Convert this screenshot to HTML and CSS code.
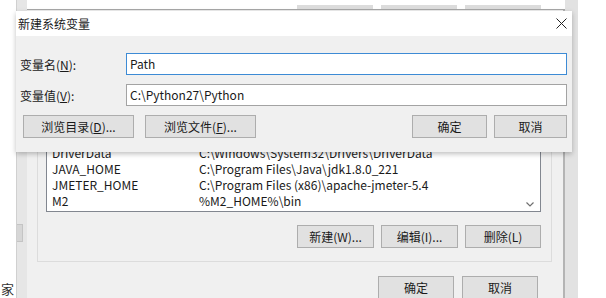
FILE: index.html
```html
<!DOCTYPE html>
<html lang="zh-CN">
<head>
  <meta charset="UTF-8" />
  <title>新建系统变量</title>
  <link rel="stylesheet" href="styles.css">
</head>
<body>
  <div class="desk">

    <div class="win sysprops">
      <div class="sp-btn"></div>
      <span class="sp-glyph">家</span>
    </div>

    <div class="win env">
      <div class="env-top">
        <span class="top-btn"></span>
        <span class="top-btn"></span>
        <span class="top-btn"></span>
      </div>
      <div class="group">
        <div class="list">
          <div class="row"><span class="name">DriverData</span><span>C:\Windows\System32\Drivers\DriverData</span></div>
          <div class="row"><span class="name">JAVA_HOME</span><span>C:\Program Files\Java\jdk1.8.0_221</span></div>
          <div class="row"><span class="name">JMETER_HOME</span><span>C:\Program Files (x86)\apache-jmeter-5.4</span></div>
          <div class="row"><span class="name">M2</span><span>%M2_HOME%\bin</span></div>
          <svg class="chev" width="8" height="5" viewBox="0 0 8 5"><path d="M0.5 0.5 L4 4 L7.5 0.5" fill="none" stroke="#707070" stroke-width="1.2"/></svg>
        </div>
        <div class="btn-row">
          <button class="btn w77">新建(W)...</button>
          <button class="btn w77">编辑(I)...</button>
          <button class="btn w76">删除(L)</button>
        </div>
      </div>
      <div class="btn-row foot">
        <button class="btn w76">确定</button>
        <button class="btn w76">取消</button>
      </div>
    </div>

    <div class="win dialog">
      <div class="titlebar">
        <span>新建系统变量</span>
        <svg class="close" width="11" height="11" viewBox="0 0 11 11"><path d="M0.5 0.5 L10.5 10.5 M10.5 0.5 L0.5 10.5" stroke="#222" stroke-width="1"/></svg>
      </div>
      <div class="dlg-body">
        <div class="field">
          <label>变量名(<u>N</u>):</label>
          <div class="input focus">Path</div>
        </div>
        <div class="field">
          <label>变量值(<u>V</u>):</label>
          <div class="input">C:\Python27\Python</div>
        </div>
        <div class="dlg-buttons">
          <div class="left">
            <button class="btn w111">浏览目录(<u>D</u>)...</button>
            <button class="btn w111">浏览文件(<u>F</u>)...</button>
          </div>
          <div class="right">
            <button class="btn w75">确定</button>
            <button class="btn w73">取消</button>
          </div>
        </div>
      </div>
    </div>

  </div>
</body>
</html>
```

FILE: styles.css
```css
* { box-sizing: border-box; }
body {
  margin: 0;
  background: #fff;
  font-family: "Noto Sans CJK SC", "Noto Sans", sans-serif;
  font-size: 12px;
  color: #1a1a1a;
}
.desk {
  position: relative;
  width: 606px;
  height: 298px;
  overflow: hidden;
}
.win { position: absolute; }

/* window far behind, left edge */
.sysprops {
  left: 16px;
  top: 0;
  width: 12px;
  height: 298px;
  background: #e6e6e6;
  border-left: 1px solid #d0d0d0;
}
.sp-btn {
  margin-top: 224px;
  width: 6px;
  height: 18px;
  background: #d6d6d6;
  border: 1px solid #c4c4c4;
  border-left: none;
}
.sp-glyph {
  position: absolute;
  left: -16px;
  top: 279px;
  font-size: 13px;
  color: #333;
}

/* environment variables window */
.env {
  left: 27px;
  top: 0;
  width: 551px;
  height: 298px;
  background: #f0f0f0;
  border-right: 13px solid #e2e2e2;
  box-shadow: inset -2px 0 0 #b4b4b4;
  display: flex;
  flex-direction: column;
}
.env-top {
  height: 10px;
  border-bottom: 1px solid #a8a8a8;
  display: flex;
  justify-content: flex-end;
  gap: 8px;
  padding-right: 24px;
  background: #fff;
}
.top-btn {
  width: 76px;
  height: 4px;
  margin-top: 5px;
  background: #dcdcdc;
}
.group {
  margin: 4px 13px 0 10px;
  border: 1px solid #dcdcdc;
  padding: 0 10px 13px 8px;
}
.list {
  position: relative;
  height: 197px;
  background: #fff;
  border: 1px solid #828790;
  display: flex;
  flex-direction: column;
  justify-content: flex-end;
  padding: 0 0 2px 5px;
}
.row {
  display: flex;
  height: 16px;
  line-height: 16px;
}
.row .name { width: 147px; }
.chev {
  position: absolute;
  right: 6px;
  bottom: 4px;
}
.btn-row {
  display: flex;
  justify-content: flex-end;
  gap: 7px;
  margin-top: 13px;
}
.foot {
  margin: 14px 27px 0 0;
  gap: 8px;
}
.btn {
  height: 23px;
  padding: 0;
  font: inherit;
  color: #1a1a1a;
  background: #e1e1e1;
  border: 1px solid #adadad;
}
.w73 { width: 73px; }
.w75 { width: 75px; }
.w76 { width: 76px; }
.w77 { width: 77px; }
.w111 { width: 111px; }

/* new system variable dialog */
.dialog {
  left: 16px;
  top: 11px;
  width: 556px;
  height: 141px;
  background: #f0f0f0;
  box-shadow: 0 2px 5px rgba(0, 0, 0, 0.25);
}
.titlebar {
  height: 25px;
  background: #fff;
  display: flex;
  align-items: center;
  justify-content: space-between;
  padding: 0 4px 0 2px;
}
.close { margin-right: 1px; }
.dlg-body {
  padding: 17px 5px 0 4px;
}
.field {
  display: flex;
  align-items: center;
  margin-bottom: 9px;
}
.field label { width: 106px; }
.input {
  flex: 1;
  height: 22px;
  line-height: 20px;
  padding-left: 3px;
  background: #fff;
  border: 1px solid #a3a3a3;
}
.input.focus { border-color: #3d8bd5; }
.dlg-buttons {
  display: flex;
  justify-content: space-between;
  margin-top: 4px;
  padding-left: 3px;
}
.dlg-buttons .left,
.dlg-buttons .right {
  display: flex;
  gap: 11px;
}
.dlg-buttons .right { gap: 7px; }
```
